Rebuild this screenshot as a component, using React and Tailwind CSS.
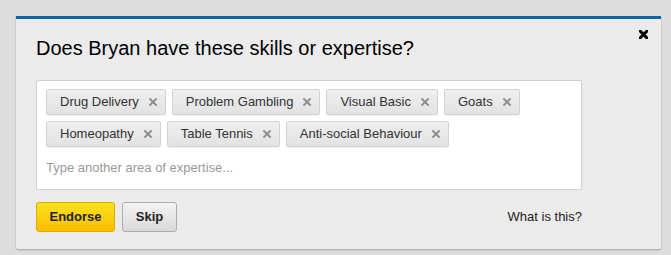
const skills = [
  "Drug Delivery",
  "Problem Gambling",
  "Visual Basic",
  "Goats",
  "Homeopathy",
  "Table Tennis",
  "Anti-social Behaviour",
];

function Cross({ size = 8, stroke = 2, className = "" }) {
  return (
    <svg width={size} height={size} viewBox="0 0 8 8" className={className}>
      <path d="M1 1L7 7M7 1L1 7" stroke="currentColor" strokeWidth={stroke} strokeLinecap="square" />
    </svg>
  );
}

function Tag({ label }) {
  return (
    <div className="flex h-[26px] items-center rounded-[2px] border border-[#d3d3d3] bg-gradient-to-b from-[#efefef] to-[#e3e3e3] pl-[13px] pr-[8px] text-[13px] text-[#333] shadow-[0_1px_0_rgba(0,0,0,0.06)]">
      <span>{label}</span>
      <Cross size={8} stroke={1.8} className="ml-[10px] text-[#8a8a8a]" />
    </div>
  );
}

export default function App() {
  return (
    <div
      className="h-[255px] w-[671px] bg-[#dddddd] pl-[16px] pr-[10px] pt-[16px]"
      style={{ fontFamily: '"Liberation Sans", Arial, sans-serif' }}
    >
      <div className="relative h-[233px] rounded-b-[2px] border-t-[3px] border-[#0b66a2] bg-[#ebebeb] px-[20px] pt-[17px] shadow-[0_1px_2px_rgba(0,0,0,0.28)]">
        <button type="button" className="absolute right-[13px] top-[11px] text-black">
          <Cross size={9} stroke={2.6} />
        </button>

        <h1 className="text-[20px] leading-[24px] text-black">Does Bryan have these skills or expertise?</h1>

        <div className="mt-[20px] w-[546px] rounded-[2px] border border-[#d0d0d0] bg-white px-[9px] pb-[13px] pt-[8px]">
          <div className="flex flex-wrap gap-[6px]">
            {skills.map((s) => (
              <Tag key={s} label={s} />
            ))}
          </div>
          <div className="mt-[13px] text-[13px] leading-[16px] text-[#999]">Type another area of expertise...</div>
        </div>

        <div className="mt-[12px] flex w-[546px] items-center">
          <button
            type="button"
            className="h-[30px] w-[79px] rounded-[3px] border border-[#e2a700] bg-gradient-to-b from-[#fde21c] to-[#f8be00] text-[13px] font-bold text-[#222]"
          >
            Endorse
          </button>
          <button
            type="button"
            className="ml-[7px] h-[30px] w-[55px] rounded-[3px] border border-[#adadad] bg-gradient-to-b from-[#f3f3f3] to-[#d9d9d9] text-[13px] font-bold text-[#222]"
          >
            Skip
          </button>
          <a className="ml-auto text-[13px] text-[#222]">What is this?</a>
        </div>
      </div>
    </div>
  );
}
